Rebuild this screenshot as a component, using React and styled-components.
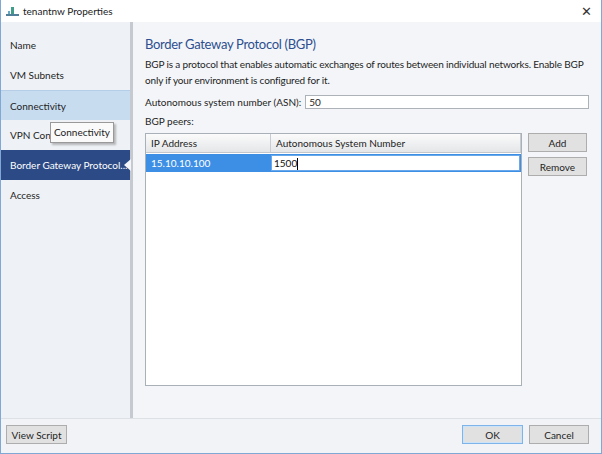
import React from 'react';
import styled, { createGlobalStyle } from 'styled-components';

const Global = createGlobalStyle`
  html, body { margin:0; padding:0; background:#fff; }
  body { font-family: "Lato", "Open Sans", sans-serif; }
`;

const Window = styled.div`
  position:relative;
  width:602px;
  height:454px;
  box-sizing:border-box;
  border:1px solid #7fa9d4;
  border-top:none;
  display:flex;
  flex-direction:column;
  background:#f3f5f8;
  overflow:hidden;
`;

const TitleBar = styled.div`
  height:22px;
  background:#fff;
  display:flex;
  align-items:center;
  padding:0 5px;
  font-size:10px;
  color:#1a1a1a;
  gap:4px;
`;

const Title = styled.span`
  flex:1;
`;

const Close = styled.span`
  font-size:13px;
  color:#333;
  margin-right:4px;
`;

const Body = styled.div`
  flex:1;
  display:flex;
  min-height:0;
`;

const Sidebar = styled.div`
  width:132px;
  background:#eef1f5;
  border-right:3px solid #c6cad0;
  padding-top:8px;
  box-sizing:border-box;
`;

const NavItem = styled.div`
  position:relative;
  height:30px;
  line-height:30px;
  padding-left:9px;
  font-size:10px;
  white-space:nowrap;
  color:${p => p.selected ? '#fff' : '#1e1e1e'};
  background:${p => p.selected ? '#2c4b86' : p.hover ? '#c8dcef' : 'transparent'};
  border-top:${p => p.hover ? '1px solid #b5cde6' : 'none'};
  box-sizing:border-box;
`;

const Notch = styled.span`
  position:absolute;
  right:-1px;
  top:9px;
  width:0;
  height:0;
  border-top:6px solid transparent;
  border-bottom:6px solid transparent;
  border-right:7px solid #f3f5f8;
`;

const Tooltip = styled.div`
  position:absolute;
  left:49px;
  top:122px;
  padding:1px 3px;
  font-size:10px;
  color:#222;
  background:#fafafa;
  border:1px solid #999;
  box-shadow:2px 2px 2px rgba(0,0,0,0.25);
  line-height:17px;
`;

const Content = styled.div`
  flex:1;
  padding:13px 12px 0 12px;
  display:flex;
  flex-direction:column;
  font-size:10px;
  color:#1e1e1e;
`;

const Heading = styled.h1`
  margin:0 0 3px;
  font-size:13px;
  line-height:18px;
  letter-spacing:-0.3px;
  font-weight:400;
  color:#2d4f90;
`;

const Desc = styled.p`
  margin:0 0 7px;
  line-height:16px;
  letter-spacing:-0.15px;
`;

const FieldRow = styled.div`
  display:flex;
  align-items:center;
  gap:4px;
`;

const TextBox = styled.div`
  flex:1;
  height:12px;
  line-height:12px;
  border:1px solid #adb2b8;
  background:#fff;
  padding-left:3px;
`;

const Label = styled.div`
  margin:5px 0 5px;
  line-height:14px;
`;

const PeersRow = styled.div`
  display:flex;
  gap:6px;
`;

const Grid = styled.div`
  width:377px;
  height:253px;
  border:1px solid #a9b0b8;
  background:#fff;
  box-sizing:border-box;
`;

const HeadRow = styled.div`
  display:flex;
  height:18px;
  background:linear-gradient(#fbfbfb, #e4e6e8);
  border-bottom:1px solid #c3c7cc;
`;

const HeadCell = styled.div`
  width:${p => p.w}px;
  flex:${p => p.w ? 'none' : 1};
  padding-left:5px;
  line-height:18px;
  border-right:1px solid #c8ccd0;
  box-sizing:border-box;
`;

const DataRow = styled.div`
  display:flex;
  height:18px;
  margin-top:1px;
  background:#3d8fe6;
  color:#fff;
  align-items:center;
`;

const DataCell = styled.div`
  width:125px;
  padding-left:5px;
  box-sizing:border-box;
`;

const EditCell = styled.div`
  flex:1;
  height:14px;
  line-height:14px;
  margin-right:1px;
  background:#fff;
  color:#111;
  border:1px solid #6aa8ec;
  padding-left:2px;
`;

const Caret = styled.span`
  display:inline-block;
  width:1px;
  height:12px;
  background:#000;
  vertical-align:middle;
`;

const SideButtons = styled.div`
  display:flex;
  flex-direction:column;
  gap:5px;
`;

const Button = styled.button`
  width:${p => p.w || 59}px;
  height:${p => p.h || 19}px;
  padding:0;
  font-family:inherit;
  font-size:10px;
  color:#1e1e1e;
  background:#e1e1e1;
  border:1px solid ${p => p.primary ? '#7eb4ea' : '#adadad'};
  box-shadow:${p => p.primary ? 'inset 0 0 0 1px #cde3f7' : 'none'};
`;

const Footer = styled.div`
  height:35px;
  box-sizing:border-box;
  border-top:1px solid #dde1e6;
  background:#f1f3f6;
  display:flex;
  align-items:flex-start;
  padding:6px 12px 0 5px;
  gap:6px;
`;

const Spacer = styled.div`
  flex:1;
`;

const AppIcon = () => (
  <svg width="13" height="11" viewBox="0 0 13 11">
    <rect x="0" y="8" width="13" height="2" fill="#4f7f99" />
    <rect x="5" y="1" width="3" height="7" fill="#3f9d8a" />
    <rect x="2" y="5" width="2" height="3" fill="#6aa7c0" />
  </svg>
);

export default function App() {
  return (
    <>
      <Global />
      <Window>
        <TitleBar>
          <AppIcon />
          <Title>tenantnw Properties</Title>
          <Close>✕</Close>
        </TitleBar>
        <Body>
          <Sidebar>
            <NavItem>Name</NavItem>
            <NavItem>VM Subnets</NavItem>
            <NavItem hover>Connectivity</NavItem>
            <NavItem>VPN Con</NavItem>
            <NavItem selected>Border Gateway Protocol...<Notch /></NavItem>
            <NavItem>Access</NavItem>
          </Sidebar>
          <Content>
            <Heading>Border Gateway Protocol (BGP)</Heading>
            <Desc>
              BGP is a protocol that enables automatic exchanges of routes between individual networks. Enable BGP only if your environment is configured for it.
            </Desc>
            <FieldRow>
              <span>Autonomous system number (ASN):</span>
              <TextBox>50</TextBox>
            </FieldRow>
            <Label>BGP peers:</Label>
            <PeersRow>
              <Grid>
                <HeadRow>
                  <HeadCell w={125}>IP Address</HeadCell>
                  <HeadCell>Autonomous System Number</HeadCell>
                </HeadRow>
                <DataRow>
                  <DataCell>15.10.10.100</DataCell>
                  <EditCell>1500<Caret /></EditCell>
                </DataRow>
              </Grid>
              <SideButtons>
                <Button>Add</Button>
                <Button>Remove</Button>
              </SideButtons>
            </PeersRow>
          </Content>
        </Body>
        <Footer>
          <Button w={61}>View Script</Button>
          <Spacer />
          <Button w={61} primary>OK</Button>
          <Button w={60}>Cancel</Button>
        </Footer>
        <Tooltip>Connectivity</Tooltip>
      </Window>
    </>
  );
}
